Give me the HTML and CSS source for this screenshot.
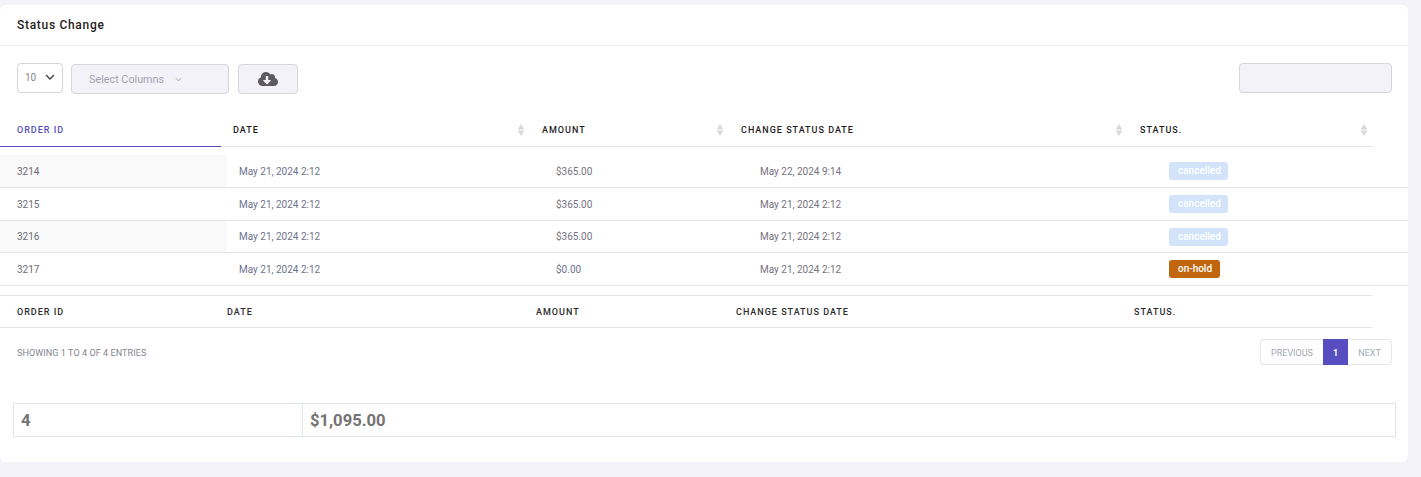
FILE: index.html
```html
<!DOCTYPE html>
<html lang="en">
<head>
<meta charset="utf-8">
<title>Status Change</title>
<link rel="stylesheet" href="styles.css">
</head>
<body>
<main class="card">
  <header class="card-header"><h1 class="card-title">Status Change</h1></header>
  <section class="toolbar">
    <div class="length-select"><span>10</span>
      <svg class="chev" viewBox="0 0 10 6" width="10" height="6"><path d="M1 1l4 4 4-4" fill="none" stroke="#444" stroke-width="1.4"/></svg>
    </div>
    <button class="btn-columns"><span>Select Columns</span>
      <svg viewBox="0 0 8 5" width="7" height="5"><path d="M1 1l3 3 3-3" fill="none" stroke="#9a9aa8" stroke-width="1"/></svg>
    </button>
    <button class="btn-export">
      <svg viewBox="0 0 640 512" width="20" height="16"><path fill="#5c5a60" d="M537.6 226.6c4.1-10.7 6.4-22.4 6.4-34.6 0-53-43-96-96-96-19.7 0-38.1 6-53.3 16.2C367 64.2 315.3 32 256 32c-88.4 0-160 71.6-160 160 0 2.7.1 5.4.2 8.1C40.2 219.8 0 273.2 0 336c0 79.5 64.5 144 144 144h368c70.7 0 128-57.3 128-128 0-61.9-44-113.6-102.4-125.4zm-132.9 88.7L299.3 420.7c-6.2 6.2-16.4 6.2-22.6 0L171.3 315.3c-10.1-10.1-2.9-27.3 11.3-27.3H248V176c0-8.8 7.2-16 16-16h48c8.8 0 16 7.2 16 16v112h65.4c14.2 0 21.4 17.2 11.3 27.3z"/></svg>
    </button>
    <div class="search"></div>
  </section>

  <div class="thead">
    <div class="th th-active">ORDER ID</div>
    <div class="th">DATE<svg class="sort" viewBox="0 0 8 12" width="8" height="12"><path fill="#d9d9de" d="M4 0l3.5 5.5H.5zM4 12L.5 6.5h7z"/></svg></div>
    <div class="th">AMOUNT<svg class="sort" viewBox="0 0 8 12" width="8" height="12"><path fill="#d9d9de" d="M4 0l3.5 5.5H.5zM4 12L.5 6.5h7z"/></svg></div>
    <div class="th">CHANGE STATUS DATE<svg class="sort" viewBox="0 0 8 12" width="8" height="12"><path fill="#d9d9de" d="M4 0l3.5 5.5H.5zM4 12L.5 6.5h7z"/></svg></div>
    <div class="th">STATUS.<svg class="sort" viewBox="0 0 8 12" width="8" height="12"><path fill="#d9d9de" d="M4 0l3.5 5.5H.5zM4 12L.5 6.5h7z"/></svg></div>
  </div>

  <div class="tbody">
    <div class="tr odd"><div class="td td-id">3214</div><div class="td td-date">May 21, 2024 2:12</div><div class="td">$365.00</div><div class="td">May 22, 2024 9:14</div><div class="td"><span class="badge cancelled">cancelled</span></div></div>
    <div class="tr"><div class="td td-id">3215</div><div class="td td-date">May 21, 2024 2:12</div><div class="td">$365.00</div><div class="td">May 21, 2024 2:12</div><div class="td"><span class="badge cancelled">cancelled</span></div></div>
    <div class="tr tr-short odd"><div class="td td-id">3216</div><div class="td td-date">May 21, 2024 2:12</div><div class="td">$365.00</div><div class="td">May 21, 2024 2:12</div><div class="td"><span class="badge cancelled">cancelled</span></div></div>
    <div class="tr"><div class="td td-id">3217</div><div class="td td-date">May 21, 2024 2:12</div><div class="td td-zero">$0.00</div><div class="td">May 21, 2024 2:12</div><div class="td"><span class="badge onhold">on-hold</span></div></div>
  </div>

  <div class="tfoot">
    <div class="tf">ORDER ID</div><div class="tf">DATE</div><div class="tf">AMOUNT</div><div class="tf">CHANGE STATUS DATE</div><div class="tf">STATUS.</div>
  </div>

  <div class="table-info">
    <div class="info">Showing 1 to 4 of 4 entries</div>
    <nav class="pager">
      <span class="page prev">Previous</span><span class="page current">1</span><span class="page next">Next</span>
    </nav>
  </div>

  <div class="totals">
    <div class="total total-count">4</div>
    <div class="total">$1,095.00</div>
  </div>
</main>
</body>
</html>
```

FILE: styles.css
```css
* { box-sizing: border-box; }
html, body { margin: 0; height: 100%; }
body {
  background: #f4f3f9;
  font-family: Roboto, "Liberation Sans", sans-serif;
  padding-top: 5px;
  overflow: hidden;
}
.card {
  width: 1408px;
  height: 457px;
  background: #fff;
  border-radius: 6px;
}
.card-header {
  height: 41px;
  border-bottom: 1px solid #edeef2;
  padding: 0 17px;
  display: flex;
  align-items: center;
}
.card-title {
  margin: 0;
  font-size: 12px;
  font-weight: 500;
  letter-spacing: 0.7px;
  color: #1f1d1d;
}
.toolbar {
  height: 67px;
  padding: 17px 16px 0 17px;
  display: flex;
  align-items: flex-start;
}
.length-select {
  width: 46px;
  height: 30px;
  border: 1px solid #d5d5da;
  border-radius: 4px;
  display: flex;
  align-items: center;
  justify-content: space-between;
  padding: 0 7px 2px;
  font-size: 10px;
  color: #85858f;
}
.btn-columns, .btn-export {
  height: 30px;
  margin-top: 1px;
  background: #f2f2f8;
  border: 1px solid #d5d5da;
  border-radius: 4px;
  display: flex;
  align-items: center;
  font-family: inherit;
}
.btn-columns {
  width: 158px;
  margin-left: 8px;
  padding: 0 0 0 17px;
  gap: 11px;
  font-size: 10.8px;
  color: #a2a2ae;
}
.btn-export {
  width: 60px;
  margin-left: 9px;
  justify-content: center;
}
.search {
  width: 153px;
  height: 30px;
  margin-left: auto;
  background: #f2f2f8;
  border: 1px solid #d5d5da;
  border-radius: 4px;
}
.thead {
  width: 1373px;
  display: grid;
  grid-template-columns: 221px 309px 199px 399px 245px;
}
.th {
  position: relative;
  display: flex;
  align-items: center;
  height: 34px;
  padding: 0 0 0 12px;
  border-bottom: 1px solid #e1e5ef;
  font-size: 9px;
  font-weight: 500;
  letter-spacing: 1px;
  color: #1f1d1d;
}
.th-active {
  padding-left: 17px;
  color: #564ec1;
  border-bottom-color: #564ec1;
}
.sort {
  position: absolute;
  right: 5px;
  top: 11px;
}
.tbody { padding-top: 8px; }
.tr {
  height: 33px;
  display: grid;
  grid-template-columns: 227px 317px 204px 409px 251px;
  border-bottom: 1px solid #e4e6ee;
}
.tr-short { height: 32px; }
.td {
  display: flex;
  align-items: center;
  padding-left: 12px;
  font-size: 10px;
  color: #757380;
}
.td-id { padding-left: 17px; color: #6e6b76; }
.td-date, .td-zero { color: #6e7390; }
.odd .td-id { background: #f9f9f9; }
.badge {
  display: inline-block;
  height: 18px;
  line-height: 18px;
  padding: 0 7.5px 0 9px;
  border-radius: 3px;
  font-size: 10px;
  font-weight: 500;
  color: #fff;
}
.cancelled { background: #d3e4fa; }
.onhold { background: #c1650f; }
.tfoot {
  width: 1373px;
  height: 33px;
  margin-top: 9px;
  border-top: 1px solid #e4e6ea;
  border-bottom: 1px solid #e4e6ea;
  display: grid;
  grid-template-columns: 227px 309px 200px 398px 239px;
  align-items: center;
}
.tf {
  font-size: 9px;
  font-weight: 500;
  letter-spacing: 1px;
  color: #2b2b2b;
}
.tf:first-child { padding-left: 17px; }
.table-info {
  height: 75px;
  padding: 11px 16px 0 17px;
  display: flex;
  justify-content: space-between;
  align-items: flex-start;
}
.info {
  margin-top: 9px;
  font-size: 9px;
  letter-spacing: 0.08px;
  text-transform: uppercase;
  color: #85858d;
}
.pager { display: flex; height: 26px; }
.page {
  display: flex;
  align-items: center;
  justify-content: center;
  padding-top: 1px;
  font-size: 9px;
  text-transform: uppercase;
  color: #a4a7b4;
  border: 1px solid #e4e6ee;
}
.prev { width: 63px; border-right: 0; border-radius: 4px 0 0 4px; }
.current { width: 25px; background: #564ec1; border-color: #564ec1; color: #fff; font-weight: 700; }
.next { width: 44px; border-left: 0; border-radius: 0 4px 4px 0; }
.totals {
  margin: 0 12px 0 13px;
  height: 34px;
  border: 1px solid #e1e5ef;
  display: grid;
  grid-template-columns: 289px 1fr;
}
.total {
  display: flex;
  align-items: center;
  padding-left: 7px;
  font-size: 16.6px;
  font-weight: 700;
  color: #757373;
}
.total-count { border-right: 1px solid #e1e5ef; }
```
